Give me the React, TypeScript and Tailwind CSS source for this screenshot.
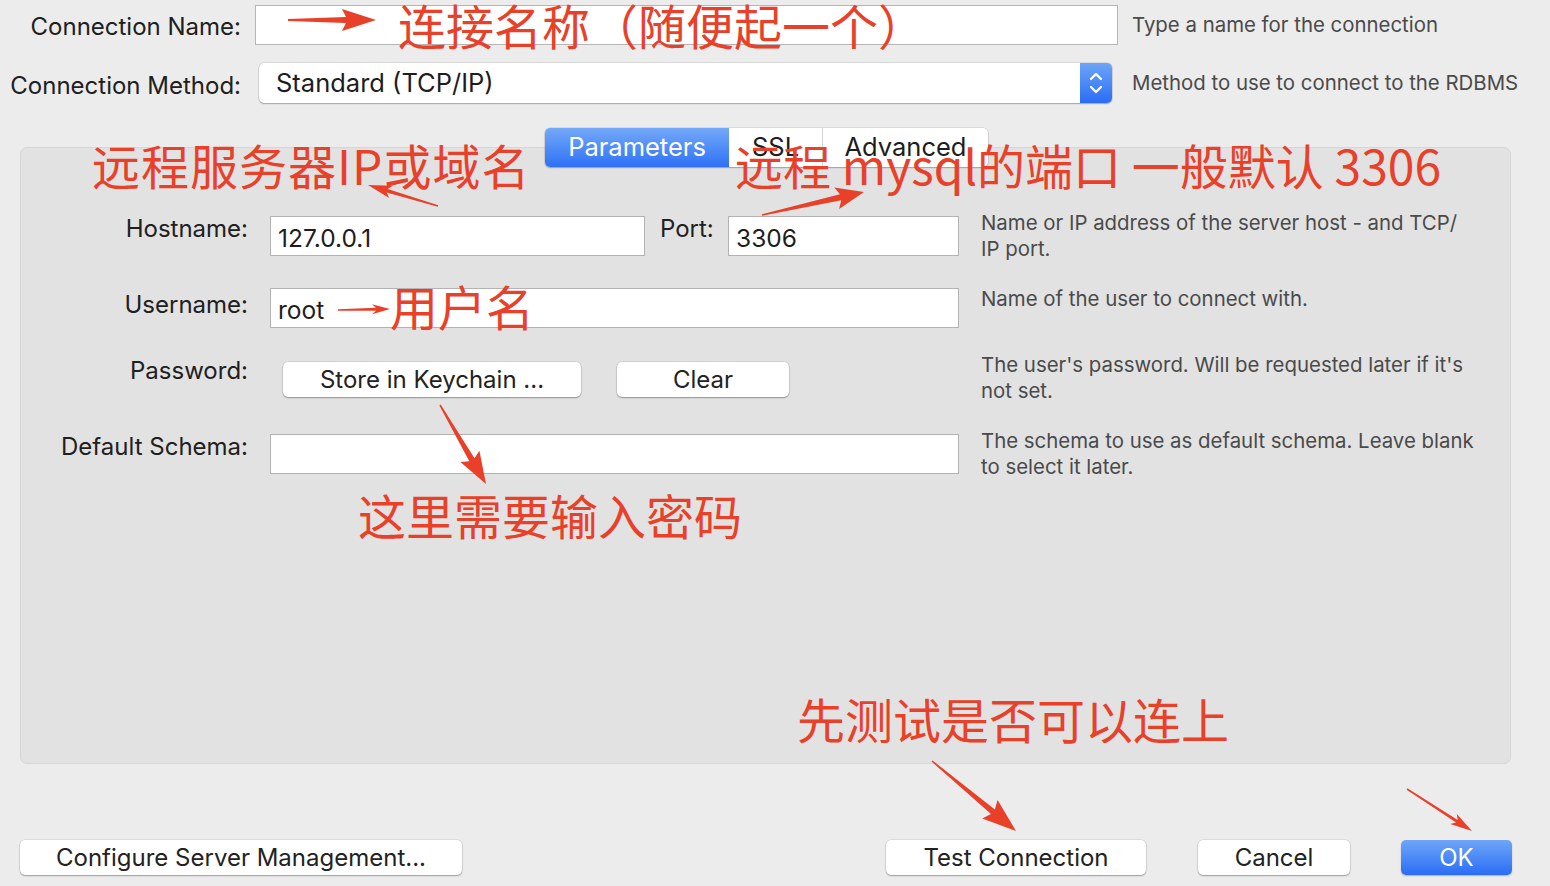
import React from "react";

type ArrowProps = { x1: number; y1: number; x2: number; y2: number; w?: number; head?: number; hw?: number; tail?: number };

function Arrow({ x1, y1, x2, y2, w = 5, head = 26, hw = 20, tail = 1.5 }: ArrowProps) {
  const len = Math.hypot(x2 - x1, y2 - y1);
  const dx = (x2 - x1) / len;
  const dy = (y2 - y1) / len;
  const nx = -dy;
  const ny = dx;
  const neckX = x2 - dx * head;
  const neckY = y2 - dy * head;
  const wingX = neckX - dx * 4;
  const wingY = neckY - dy * 4;
  const pts = [
    [x1 + (nx * tail) / 2, y1 + (ny * tail) / 2],
    [neckX + (nx * w) / 2, neckY + (ny * w) / 2],
    [wingX + (nx * hw) / 2, wingY + (ny * hw) / 2],
    [x2, y2],
    [wingX - (nx * hw) / 2, wingY - (ny * hw) / 2],
    [neckX - (nx * w) / 2, neckY - (ny * w) / 2],
    [x1 - (nx * tail) / 2, y1 - (ny * tail) / 2],
  ];
  return <polygon points={pts.map((p) => p.join(",")).join(" ")} fill="#e9402a" />;
}

function MacButton({ label, className }: { label: string; className: string }) {
  return (
    <button
      type="button"
      className={"h-[35px] rounded-[5px] bg-white text-[24px] text-[#222] leading-none shadow-[0_1px_1.5px_rgba(0,0,0,0.3),0_0_0_0.5px_rgba(0,0,0,0.12)] " + className}
    >
      {label}
    </button>
  );
}

function TextBox({ value, className }: { value?: string; className: string }) {
  return (
    <div className={"h-[40px] bg-white border border-[#b3b3b3] flex items-center pl-[7px] pt-[5px] text-[24.5px] text-[#1d1d1d] " + className}>
      {value}
    </div>
  );
}

function Hint({ children, className }: { children: React.ReactNode; className?: string }) {
  return <div className={"text-[20.4px] leading-[26px] text-[#4a4a4a] " + (className ?? "")}>{children}</div>;
}

export default function App() {
  return (
    <div className="relative w-[1550px] h-[886px] overflow-hidden bg-[#ececec] font-['Inter','Noto_Sans_CJK_SC',sans-serif] text-[#202020]">
      {/* top fields */}
      <div className="pt-[5px]">
        <div className="flex items-center h-[40px]">
          <div className="w-[241px] text-right text-[24px] pt-[3px]">Connection Name:</div>
          <div className="ml-[14px] w-[863px] h-[40px] bg-white border border-[#b5b5b5]" />
          <Hint className="ml-[14px]">Type a name for the connection</Hint>
        </div>
        <div className="flex items-center h-[40px] mt-[18px]">
          <div className="w-[241px] text-right text-[24px] pt-[5px]">Connection Method:</div>
          <div className="ml-[18px] w-[853px] h-[40px] flex rounded-[5px] bg-white shadow-[0_1px_1.5px_rgba(0,0,0,0.25),0_0_0_0.5px_rgba(0,0,0,0.15)]">
            <div className="flex-1 flex items-center pl-[17px] text-[25.5px] text-[#1d1d1d]">Standard (TCP/IP)</div>
            <div className="w-[32px] h-full rounded-r-[5px] bg-gradient-to-b from-[#6da4f8] to-[#2a6cf4] flex items-center justify-center">
              <svg width="16" height="28" viewBox="0 0 16 28" fill="none" stroke="white" strokeWidth="2.2" strokeLinecap="round" strokeLinejoin="round">
                <path d="M3 10 L8 5 L13 10" />
                <path d="M3 18 L8 23 L13 18" />
              </svg>
            </div>
          </div>
          <Hint className="ml-[20px]">Method to use to connect to the RDBMS</Hint>
        </div>
      </div>

      {/* tabs */}
      <div className="relative z-10 mt-[25px] flex justify-center">
        <div className="ml-[-17px] flex h-[39px] rounded-[5px] bg-white shadow-[0_1px_1.5px_rgba(0,0,0,0.25),0_0_0_0.5px_rgba(0,0,0,0.15)] text-[25.5px]">
          <div className="w-[184px] rounded-l-[5px] bg-gradient-to-b from-[#73a8f8] to-[#2f70f5] text-white flex items-center justify-center">Parameters</div>
          <div className="w-[94px] border-r border-[#d4d4d4] flex items-center justify-center text-[#1d1d1d]">SSL</div>
          <div className="w-[165px] flex items-center justify-center text-[#1d1d1d]">Advanced</div>
        </div>
      </div>

      {/* parameters panel */}
      <div className="mt-[-20px] mx-[20px] w-[1491px] h-[617px] rounded-[7px] bg-[#e2e2e2] border border-[#d6d6d6] pt-[68px]">
        <div className="flex items-start h-[72px]">
          <div className="w-[227px] text-right text-[24px] leading-[26px]">Hostname:</div>
          <TextBox value="127.0.0.1" className="ml-[22px] w-[375px]" />
          <div className="w-[83px] pl-[15px] text-[24px] leading-[26px]">Port:</div>
          <TextBox value="3306" className="w-[231px]" />
          <Hint className="ml-[22px] mt-[-6px]">
            Name or IP address of the server host - and TCP/
            <br />
            IP port.
          </Hint>
        </div>
        <div className="flex items-start h-[70px]">
          <div className="w-[227px] text-right text-[24px] leading-[26px] mt-[4px]">Username:</div>
          <TextBox value="root" className="ml-[22px] w-[689px]" />
          <Hint className="ml-[22px] mt-[-2px]">Name of the user to connect with.</Hint>
        </div>
        <div className="flex items-start h-[76px]">
          <div className="w-[227px] text-right text-[24px] leading-[26px]">Password:</div>
          <div className="ml-[22px] w-[689px] pl-[13px] pt-[4px] flex">
            <MacButton label="Store in Keychain ..." className="w-[298px]" />
            <MacButton label="Clear" className="ml-[36px] w-[172px]" />
          </div>
          <Hint className="ml-[22px] mt-[-6px]">
            The user's password. Will be requested later if it's
            <br />
            not set.
          </Hint>
        </div>
        <div className="flex items-start">
          <div className="w-[227px] text-right text-[24px] leading-[26px]">Default Schema:</div>
          <TextBox className="ml-[22px] w-[689px]" />
          <Hint className="ml-[22px] mt-[-6px]">
            The schema to use as default schema. Leave blank
            <br />
            to select it later.
          </Hint>
        </div>
      </div>

      {/* bottom buttons */}
      <div className="mt-[76px] pl-[20px] flex">
        <MacButton label="Configure Server Management..." className="w-[442px]" />
        <MacButton label="Test Connection" className="ml-[424px] w-[260px]" />
        <MacButton label="Cancel" className="ml-[52px] w-[152px]" />
        <button type="button" className="ml-[51px] w-[111px] h-[35px] rounded-[5px] bg-gradient-to-b from-[#6ea5f8] to-[#2b6cf4] text-white text-[24px] leading-none shadow-[0_1px_1.5px_rgba(0,0,0,0.25)]">
          OK
        </button>
      </div>

      {/* red annotations */}
      <div className="absolute inset-0 z-20 pointer-events-none font-['Noto_Sans_CJK_SC',sans-serif] text-[#e9402a] text-[48px] leading-none">
        <div className="absolute left-[398px] top-[0px]">连接名称（随便起一个）</div>
        <div className="absolute left-[92px] top-[140px] tracking-[1px]">远程服务器IP或域名</div>
        <div className="absolute left-[735px] top-[140px]">远程 mysql的端口 一般默认 3306</div>
        <div className="absolute left-[390px] top-[281px]">用户名</div>
        <div className="absolute left-[358px] top-[490px]">这里需要输入密码</div>
        <div className="absolute left-[797px] top-[694px]">先测试是否可以连上</div>
        <svg className="absolute inset-0" width="1550" height="886">
          <Arrow x1={288} y1={20} x2={376} y2={20} w={6} head={30} hw={22} tail={2} />
          <Arrow x1={438} y1={206} x2={368} y2={185} w={3.5} head={20} hw={13} />
          <Arrow x1={762} y1={215} x2={864} y2={192} w={6} head={24} hw={22} />
          <Arrow x1={338} y1={310} x2={390} y2={309} w={3} head={14} hw={10} />
          <Arrow x1={440} y1={405} x2={486} y2={484} w={6} head={28} hw={22} />
          <Arrow x1={932} y1={761} x2={1016} y2={831} w={6} head={30} hw={24} />
          <Arrow x1={1407} y1={789} x2={1472} y2={831} w={3} head={18} hw={12} />
        </svg>
      </div>
    </div>
  );
}
